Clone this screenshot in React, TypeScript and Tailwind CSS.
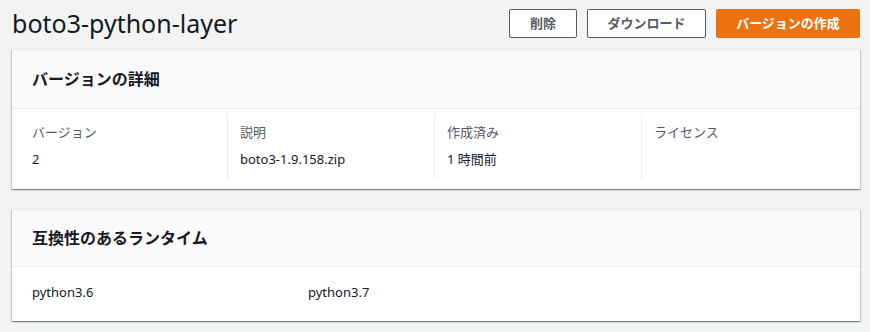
import React from "react";

const font = { fontFamily: '"Noto Sans", "Noto Sans CJK JP", sans-serif' };

function Card({ title, headerPad, children }: { title: string; headerPad: string; children: React.ReactNode }) {
  return (
    <div className="bg-white shadow-[0_1px_1px_0_rgba(0,28,36,0.3),1px_1px_1px_0_rgba(0,28,36,0.15),-1px_1px_1px_0_rgba(0,28,36,0.15)] border-t border-[#eaeded]">
      <div className={`bg-[#fafafa] border-b border-[#eaeded] px-5 ${headerPad}`}>
        <h2 className="text-[16px] leading-[22px] font-bold text-[#16191f]">{title}</h2>
      </div>
      {children}
    </div>
  );
}

export default function App() {
  const cols = [
    { label: "バージョン", value: "2" },
    { label: "説明", value: "boto3-1.9.158.zip" },
    { label: "作成済み", value: "1 時間前" },
    { label: "ライセンス", value: "" },
  ];
  return (
    <div className="min-h-[332px] bg-[#f2f3f3] pl-3 pr-[10px]" style={font}>
      <div className="flex items-center justify-between pt-[9px] pb-[11px]">
        <h1 className="text-[25px] leading-[29px] text-[#16191f] -mt-[1px]">boto3-python-layer</h1>
        <div className="flex gap-[10px]">
          <button className="h-[29px] w-[68px] border border-[#545b64] bg-white text-[13px] font-bold text-[#545b64] rounded-[2px]">削除</button>
          <button className="h-[29px] w-[119px] border border-[#545b64] bg-white text-[13px] font-bold text-[#545b64] rounded-[2px]">ダウンロード</button>
          <button className="h-[29px] w-[144px] border border-[#ec7211] bg-[#ec7211] text-[13px] font-bold text-white rounded-[2px]">バージョンの作成</button>
        </div>
      </div>

      <div className="flex flex-col gap-5">
        <Card title="バージョンの詳細" headerPad="py-[18px]">
          <div className="grid grid-cols-4 pl-2 pr-3 pt-[5px] pb-[10px]">
            {cols.map((c, i) => (
              <div
                key={c.label}
                className={`px-3 pt-[7px] pb-[9px] ${i > 0 ? "border-l border-[#eaeded]" : ""}`}
              >
                <div className="text-[13px] leading-[22px] text-[#545b64]">{c.label}</div>
                <div className="text-[13px] leading-[22px] text-[#16191f] mt-[5px] min-h-[22px]">{c.value}</div>
              </div>
            ))}
          </div>
        </Card>

        <Card title="互換性のあるランタイム" headerPad="pt-[17px] pb-[17px]">
          <div className="grid grid-cols-3 pl-2 pr-3 pt-[14px] pb-[18px]">
            <div className="px-3 text-[13px] leading-[22px] text-[#16191f]">python3.6</div>
            <div className="px-3 text-[13px] leading-[22px] text-[#16191f]">python3.7</div>
            <div />
          </div>
        </Card>
      </div>
    </div>
  );
}
